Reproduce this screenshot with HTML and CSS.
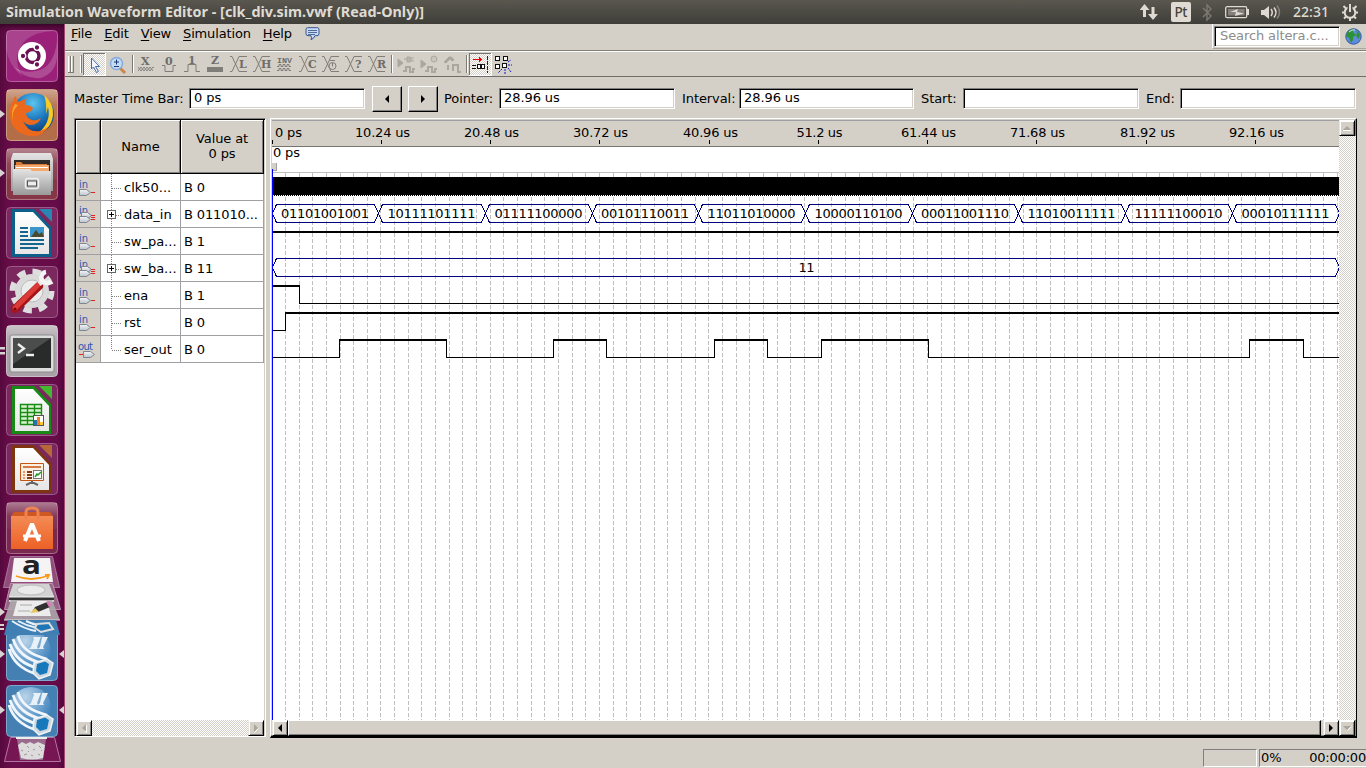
FILE: index.html
```html
<!DOCTYPE html>
<html lang="en">
<head>
<meta charset="utf-8">
<title>Simulation Waveform Editor</title>
<link rel="stylesheet" href="styles.css">
</head>
<body>
<svg width="0" height="0" class="defs">
  <defs>
    <linearGradient id="gloss" x1="0" y1="0" x2="0" y2="1"><stop offset="0" stop-color="#fff" stop-opacity=".38"/><stop offset=".5" stop-color="#fff" stop-opacity=".08"/><stop offset="1" stop-color="#fff" stop-opacity=".04"/></linearGradient>
    <linearGradient id="silver" x1="0" y1="0" x2="0" y2="1"><stop offset="0" stop-color="#e4e4e4"/><stop offset="1" stop-color="#9a9a9a"/></linearGradient>
    <linearGradient id="orange" x1="0" y1="0" x2="0" y2="1"><stop offset="0" stop-color="#f48b55"/><stop offset="1" stop-color="#ec6126"/></linearGradient>
    <linearGradient id="paper" x1="0" y1="0" x2="0" y2="1"><stop offset="0" stop-color="#fff"/><stop offset="1" stop-color="#e6e6e6"/></linearGradient>
    <linearGradient id="pin" x1="0" y1="0" x2="0" y2="1"><stop offset="0" stop-color="#f4f6f8"/><stop offset="1" stop-color="#b9c2cc"/></linearGradient>
    <radialGradient id="sea" cx=".5" cy=".25" r=".8"><stop offset="0" stop-color="#5cc4ee"/><stop offset=".5" stop-color="#1b76bd"/><stop offset="1" stop-color="#0d2c66"/></radialGradient>
    <radialGradient id="ball" cx=".35" cy=".25" r=".85"><stop offset="0" stop-color="#b9d4ea"/><stop offset="1" stop-color="#2c76b4"/></radialGradient>
    <pattern id="dither" width="2" height="2" patternUnits="userSpaceOnUse"><rect width="2" height="2" fill="#fff"/><rect width="1" height="1" fill="#d4d0c8"/><rect x="1" y="1" width="1" height="1" fill="#d4d0c8"/></pattern>
    <symbol id="pin-in" viewBox="0 0 24 27"><text x="3" y="14" class="pin-label">in</text><path d="M3.500 15.500h7l4 3-4 3h-7z" fill="url(#pin)" stroke="#7d858e"/><path d="M15 18h4v1h-4z" fill="#e82020"/></symbol>
    <symbol id="pin-bus" viewBox="0 0 24 27"><text x="3" y="13" class="pin-label">in</text><path d="M5.500 11.500h6l4 3-4 3h-6z" fill="url(#pin)" stroke="#7d858e"/><path d="M3.500 15.500h7l4 3-4 3h-7z" fill="url(#pin)" stroke="#7d858e"/><path d="M15 14h4v1h-4zM15 16h4v1h-4zM15 18h4v1h-4z" fill="#e82020"/></symbol>
    <symbol id="pin-out" viewBox="0 0 24 27"><text x="2" y="14" class="pin-label" textLength="15">out</text><path d="M7.500 15.500h7l4 3-4 3h-7z" fill="url(#pin)" stroke="#7d858e"/><path d="M3 18h4v1h-4z" fill="#e82020"/></symbol>
    <symbol id="quartus" viewBox="0 0 52 52">
      <rect x=".5" y=".5" width="51" height="51" rx="4" fill="#4580b2" stroke="#7ea8cb"/>
      <circle cx="25" cy="22" r="20" fill="url(#ball)"/>
      <path d="M3 20q5 18 27 25M4 15q6 19 28 24M7 10q6 19 29 24M12 7q4 17 29 23" fill="none" stroke="#f0f6fb" stroke-width="2.800"/>
      <path d="M28 34l13-4 6 4-3 12-11 4-6-6z" fill="#cfd8df" stroke="#f2f5f7" stroke-width="1.500"/>
      <path d="M31 35l8-2.500 4 2.500-2 9-7 2-4-4z" fill="#1778bb"/>
      <path d="M27 8h8l-1 2-3 8 1 2h-9l2-2 3-8zM36 8h6l-1 2-4 8 1 2h-6l2-2z" fill="#e8f1f8"/>
    </symbol>
  </defs>
</svg>

<header class="panel">
  <svg class="title" width="420" height="24"><text x="0" y="17" textLength="418" lengthAdjust="spacingAndGlyphs">Simulation Waveform Editor - [clk_div.sim.vwf (Read-Only)]</text></svg>
  <svg class="tray" width="226" height="24" fill="#dfdbd2">
    <path d="M4.500 4l5 6h-3.500v7h-3v-7h-3.500zM13 20l-5-6h3.500v-7h3v7h3.500z"/>
    <rect x="31" y="2" width="20" height="20" rx="2"/><text x="34.500" y="17" class="kbd" textLength="13">Pt</text>
    <path d="M63 8l8 8-4 4v-15l4 4-8 8" fill="none" stroke="#7e7a72" stroke-width="1.400"/>
    <rect x="85.700" y="6.700" width="21" height="11" rx="1.500" fill="none" stroke="#dfdbd2" stroke-width="1.300"/><path d="M107 9h2v6h-2z"/><rect x="88" y="9" width="16.500" height="6.500" fill="#85817a"/><path d="M90 12l8-3-1 3 7 1.500-9 2.500 1-4z"/>
    <path d="M121 10h3l5-4v13l-5-4h-3z"/><path d="M131 9q2.500 3.500 0 7M134 7.500q4 5 0 10" fill="none" stroke="#dfdbd2" stroke-width="1.500"/><path d="M137 5.500q5 7 0 13" fill="none" stroke="#85817a" stroke-width="1.500"/>
    <text x="153" y="17" class="clock" textLength="36">22:31</text>
    <circle cx="210" cy="12.500" r="5.300" fill="none" stroke="#dfdbd2" stroke-width="2"/><path d="M207.500 4h5v6h-5z" fill="#4e4c45"/><path d="M210 4v8M203.500 6l2.500 2.500M216.500 6l-2.500 2.500M202 12.500h3M215 12.500h3M204 18.500l2-2M216 18.500l-2-2M210 18v3" stroke="#dfdbd2" stroke-width="2"/>
  </svg>
</header>

<div class="desktop">
<aside class="launcher">
  <svg class="tile" viewBox="0 0 52 52"><rect x=".5" y=".5" width="51" height="51" rx="4" fill="#9a2079" stroke="#b55f9e"/><path d="M1 1h50q-24 0-34 12-12 16 0 34-22-18-16-46z" fill="#fff" opacity=".16"/><path d="M51 10q-2 24-17 30-15 5-27-4 12 14 28 12 14-5 16-20z" fill="#fff" opacity=".2"/><circle cx="26" cy="26" r="14" fill="#fff"/><circle cx="26.500" cy="26" r="6.500" fill="none" stroke="#6c1152" stroke-width="3.400"/><g fill="#6c1152" stroke="#fff" stroke-width="1.300"><circle cx="17" cy="26" r="2.800"/><circle cx="31" cy="17.500" r="2.800"/><circle cx="31" cy="34.500" r="2.800"/></g></svg>
  <svg class="tile" viewBox="0 0 52 52"><rect x=".5" y=".5" width="51" height="51" rx="4" fill="#b36d48" stroke="#c99b80"/><rect x="1" y="1" width="50" height="30" fill="url(#gloss)"/><circle cx="27" cy="25" r="21" fill="url(#sea)"/><path d="M38 6q10 8 9 20-2 16-17 20 16-12 12-28l-2 7q1-10-2-19z" fill="#f9cb22"/><path d="M7 12q1-4 3-5 0 4 3 6 4-3 8-3-3 3-2 6 5 0 8 3-1 4-7 5 0 5 6 7 5 1 9-2-3 7-10 7-5 0-8-4 5 12 17 10 5-1 9-5-7 12-20 10-18-4-19-20-1-8 3-15z" fill="#ec681c"/><path d="M9 15q-5 8-2 17-2-9 5-16z" fill="#f6a32b"/></svg>
  <svg class="tile" viewBox="0 0 52 52"><rect x=".5" y=".5" width="51" height="51" rx="4" fill="#853748" stroke="#ad7482"/><rect x="1" y="1" width="50" height="30" fill="url(#gloss)"/><path d="M7 5h38l2 6v32h-42v-32z" fill="url(#silver)"/><path d="M8 12h36v12h-36z" fill="#302b28"/><path d="M10 14h5l2 2h24v6h-31z" fill="#d97a3a"/><path d="M9 17h34v6h-34z" fill="#f4a86c"/><path d="M10 19.500h32" stroke="#fff" stroke-width="1"/><path d="M7 21h17l2 2h19v24h-38z" fill="url(#silver)"/><rect x="19.500" y="30.500" width="13" height="10" rx="2" fill="none" stroke="#eee" stroke-width="1.500"/><rect x="21.500" y="33" width="9" height="5" fill="#eee" stroke="#555"/></svg>
  <svg class="tile" viewBox="0 0 52 52"><rect class="plate" x=".5" y=".5" width="51" height="51" rx="4"/><path d="M6 2h22l17 18v30h-39v-46z" fill="#0c5f8b"/><path d="M9 5h18l16 17v25h-34z" fill="url(#paper)"/><path d="M33 2h13v13z" fill="#2a85b5"/><path d="M14 21h8M14 25h8M14 29h8M14 33h24M14 37h24M14 41h18" stroke="#15658f" stroke-width="1.800"/><path d="M24 20h14v10h-14z" fill="#3d96cb"/><path d="M25 30l5-7 3 4 3-2 2 5z" fill="#4a4a30"/></svg>
  <svg class="tile" viewBox="0 0 52 52"><rect class="plate" x=".5" y=".5" width="51" height="51" rx="4"/><circle cx="26" cy="25" r="19.500" fill="none" stroke="#dedede" stroke-width="6" stroke-dasharray="8.300 7"/><circle cx="26" cy="25" r="17" fill="#d9d9d9"/><circle cx="26" cy="25" r="11" fill="#ececec" stroke="#bcbcbc"/><path d="M9 43L33 20" stroke="#a51418" stroke-width="8" stroke-linecap="round"/><path d="M9 42L32 19" stroke="#db3a37" stroke-width="5" stroke-linecap="round"/><path d="M33 18l5-4" stroke="#e9e9e9" stroke-width="5"/><path d="M40 6a5.500 5.500 0 1 0 5 9" fill="none" stroke="#f3f3f3" stroke-width="4.500"/><circle cx="9" cy="43" r="1.500" fill="#701"/></svg>
  <svg class="tile" viewBox="0 0 52 52"><rect x=".5" y=".5" width="51" height="51" rx="4" fill="#aaa1a8" stroke="#c8c0c5"/><rect x="1" y="1" width="50" height="26" fill="url(#gloss)"/><rect x="4" y="10" width="44" height="37" rx="2" fill="#dcdcdc" stroke="#8c8c8c"/><rect x="7" y="13" width="38" height="30" fill="#292b2b"/><path d="M7 13h38l-38 26z" fill="#fff" opacity=".16"/><path d="M12 19l6 4.500-6 4.500M20 30h8" fill="none" stroke="#eee" stroke-width="2.300"/></svg>
  <svg class="tile" viewBox="0 0 52 52"><rect class="plate" x=".5" y=".5" width="51" height="51" rx="4"/><path d="M6 2h22l17 18v30h-39v-46z" fill="#168a15"/><path d="M9 5h18l16 17v25h-34z" fill="url(#paper)"/><path d="M33 2h13v13z" fill="#45b830"/><path d="M14 20h22v21h-22z" fill="#d8f3cf"/><path d="M14.500 20.500h21v20h-21zM14 24.500h22M14 28.500h22M14 32.500h22M14 36.500h22M21.500 20v21M28.500 20v21" fill="none" stroke="#188a16" stroke-width="1.400"/><rect x="27.500" y="31.500" width="10" height="10" fill="#fff" stroke="#555"/><path d="M28 36h3v5h-3z" fill="#2276ad"/><path d="M31 33h3v8h-3z" fill="#ef7e26"/><path d="M34 38h3v3h-3z" fill="#fdc527"/></svg>
  <svg class="tile" viewBox="0 0 52 52"><rect class="plate" x=".5" y=".5" width="51" height="51" rx="4"/><path d="M6 2h22l17 18v30h-39v-46z" fill="#7e3411"/><path d="M9 5h18l16 17v25h-34z" fill="url(#paper)"/><path d="M33 2h13v13z" fill="#b6683a"/><path d="M14.500 20.500h23v17h-23z" fill="#fbeee2" stroke="#c65413"/><path d="M17 24h18" stroke="#c65413" stroke-width="1.500"/><path d="M17 29h2M17 32h2M17 35h2" stroke="#ee9a5e" stroke-width="2"/><path d="M21 29h5M21 32h5M21 35h5" stroke="#833b19" stroke-width="2"/><rect x="27.500" y="27.500" width="8" height="8" fill="#fff" stroke="#777"/><path d="M29 34l2-3 1 1 3-3" fill="none" stroke="#299629" stroke-width="1.500"/><path d="M26 38v3M20 42l6-3 6 3" fill="none" stroke="#666" stroke-width="2"/></svg>
  <svg class="tile" viewBox="0 0 52 52"><rect x=".5" y=".5" width="51" height="51" rx="4" fill="#79294d" stroke="#a76c89"/><rect x="1" y="1" width="50" height="26" fill="url(#gloss)"/><path d="M5 14h42v33h-42z" fill="url(#orange)"/><path d="M5 14l3-4h36l3 4z" fill="#cf5722"/><path d="M20 17v-7q0-4 6-4t6 4v7" fill="none" stroke="#ee8250" stroke-width="3"/><path d="M19 39l6.500-16h1l6.500 16" fill="none" stroke="#fff" stroke-width="4"/><path d="M17 34h18" stroke="#fff" stroke-width="3"/></svg>
  <svg class="stack" width="64" height="214" viewBox="0 0 64 214">
    <path d="M10.500 1.500h42l7 31h-56z" fill="#914d79" stroke="#a9759a"/>
    <path d="M14 3h36l3 24h-42z" fill="#f5f3f4"/><text x="22" y="19" class="amazon" textLength="19" lengthAdjust="spacingAndGlyphs">a</text><path d="M16 21q15 6 31 0M45 20l4 0-2 4" fill="none" stroke="#f79b1c" stroke-width="1.800"/>
    <path d="M10.500 28.500h42l8 26h-56z" fill="#966587" stroke="#bc95ad"/>
    <path d="M13 29h36l5 12v6h-45v-6z" fill="#d2d2d2"/><ellipse cx="31" cy="35" rx="14" ry="5" fill="#eaeaea" stroke="#bbb"/><path d="M9 42h45v3h-45z" fill="#333"/><path d="M9 42h45" stroke="#f5f5f5"/>
    <path d="M11 45l41 0 8 20h-56z" fill="#ada9ac" opacity=".9"/><path d="M4 65h56" stroke="#ddd"/>
    <path d="M17 46h30l4 15h-38z" fill="#ececec"/><path d="M20 50h12M18 56h12" stroke="#aaa"/><path d="M32 57l3-5 12-5 3 5-12 5z" fill="#303030"/><path d="M30 58l5-5 4 4z" fill="#e9c463"/><path d="M46 47l3-1 3 5-3 1z" fill="#d979b4"/>
    <path d="M8 65h48l4 15h-56z" fill="#3f7fb3"/><path d="M12 66q12 8 24 10M18 66q9 5 19 7M26 66q6 3 12 4" fill="none" stroke="#e8f1f8" stroke-width="2"/><path d="M37 69l12-1 4 6-12 3-6-4z" fill="#1f75b5" stroke="#ddd" stroke-width="2"/>
    <svg x="6" y="80" width="52" height="46" viewBox="0 6 52 46"><use href="#quartus" width="52" height="52"/></svg>
    <use href="#quartus" x="6" y="130" width="52" height="52"/>
    <path d="M10.500 182.500h44l6 24h-56z" fill="#761754" stroke="#b173a0"/><path d="M16 183h31" stroke="#eee" stroke-width="2"/><path d="M17 184h29l-3 21h-23z" fill="#9a6b8d"/><path d="M18 190l4-3 4 2 4-2 4 2 4-2 7 3-2 13q-11 3-22 0z" fill="#dddbdc"/><path d="M21 195l2 1M27 191l2 2M33 195l2-1M39 191l2 2M24 200l3-1M31 200l2 1M38 199l2 1M28 196l1 1M41 196l1-1" stroke="#9c979a"/>
  </svg>
  <svg class="pips" width="65" height="744" fill="#d7d3d1"><path d="M0 86l5 4-5 4zM0 145l5 4-5 4zM0 323h5v2.500h-5zM0 328h5v2.500h-5zM0 584l5 4-5 4zM0 600h4v2h-4zM0 604h4v2h-4zM0 626l5 4-5 4zM64 626l-5 4 5 4zM0 682l5 4-5 4zM64 682l-5 4 5 4z"/></svg>
</aside>

<main class="app">
  <nav class="menubar">
    <span class="menu"><u>F</u>ile</span><span class="menu"><u>E</u>dit</span><span class="menu"><u>V</u>iew</span><span class="menu"><u>S</u>imulation</span><span class="menu"><u>H</u>elp</span>
    <svg class="bubble" width="15" height="14" viewBox="0 0 15 14"><path d="M2.500.7h10q1.500 0 1.500 2v4q0 2-2 2h-2q-1 3-4 4 1-2 0-4h-3q-2 0-2-2v-4q0-2 1.500-2z" fill="#c7d9f4" stroke="#35558e"/><path d="M3 3.500h9M3 5.500h9M3 7.500h7" stroke="#31517f" stroke-width=".8"/></svg>
    <div class="search"><div class="field search-field">Search altera.c...</div>
      <svg width="17" height="17" viewBox="0 0 17 17"><circle cx="8.500" cy="8.500" r="7.700" fill="#5e8be0" stroke="#31569d"/><path d="M2 5q4-5 7-4l-1 3 3 3-3 2v3l-2 3-2-5-3-2zM11 2l4 4-1 5-3-3 1-3z" fill="#2d9135"/><path d="M4 4q3-3 6-2" stroke="#d8e8ff" fill="none"/></svg>
    </div>
  </nav>

  <svg class="toolbar" width="1301" height="27">
    <g shape-rendering="crispEdges"><path d="M0 0h1301v1h-1301z" fill="#808078"/><path d="M0 1h1301v1h-1301z" fill="#fff"/><path d="M0 26h1301v1h-1301z" fill="#6f6d68"/>
    <path d="M3 6h1v17h-1zM6 6h1v17h-1zM15 6h1v17h-1z" fill="#fff"/><path d="M5 6h1v17h-1zM8 6h1v17h-1zM3 22h3v1h-3zM6 22h3v1h-3zM16 5h1v18h-1zM67 5h1v18h-1zM326 5h1v18h-1zM401 5h1v18h-1z" fill="#7d7b75"/><path d="M68 5h1v18h-1zM327 5h1v18h-1zM402 5h1v18h-1z" fill="#fff"/>
    <rect x="18" y="3" width="22" height="22" fill="url(#dither)"/><path d="M18 25v-22h22" fill="none" stroke="#77756f"/><path d="M40 3v22h-22" fill="none" stroke="#fff"/>
    <rect x="404" y="3" width="22" height="22" fill="url(#dither)"/><path d="M404 25v-22h22" fill="none" stroke="#77756f"/><path d="M426 3v22h-22" fill="none" stroke="#fff"/></g>
    <path d="M26.500 8l8 8.500h-4l3 5-2 1-3-5.500-2 2z" fill="#f2f6fc" stroke="#476ba5"/>
    <path d="M55 18l5 5" stroke="#cc854a" stroke-width="3"/><circle cx="51.500" cy="13.500" r="6" fill="#c4dbf4" stroke="#86abda" stroke-width="1.500"/><path d="M49 12h5M51.500 9.500v5M49 16.500h5" stroke="#173b7a"/>
    <g fill="none" stroke="#807e78">
      <path d="M73 21l3-4 3 4 3-4 3 4 3-4 1 1M73 17l3 4 3-4 3 4 3-4 3 4" stroke-width=".9"/>
      <path d="M97 15.500h3v6h8v-6h3M119 21.500h4v-7h8v7h4"/><path d="M142 17h16v5h-16z" fill="#807e78" stroke="none"/>
      <path id="cross" d="M165 6.500h2l7 15h8M165 21.500h2l7-15h8"/>
      <use href="#cross" x="23"/><use href="#cross" x="69"/><use href="#cross" x="92"/><use href="#cross" x="115"/><use href="#cross" x="138"/>
      <path d="M212 16.500h2v-2h2v2h2v-2h2v2h2v-2h2v2h2M212 20.500h2v-2h2v2h2v-2h2v2h2v-2h2v2h2"/>
      <circle cx="267.500" cy="16" r="3.500" fill="#d4d0c8"/><path d="M265 10.500h5M267.500 13v3.500"/>
    </g>
    <g class="glyph"><text x="76" y="15">X</text><text x="100" y="15">0</text><text x="123" y="14">1</text><text x="146" y="14">Z</text><text x="174" y="18">L</text><text x="196" y="18">H</text><text x="212" y="13" class="inv" textLength="15" lengthAdjust="spacingAndGlyphs">INV</text><text x="243" y="18">C</text><text x="290" y="18">?</text><text x="312" y="18">R</text></g>
    <g stroke="#aaa79f" fill="#aaa79f"><path d="M333 9l5 4-5 4z"/><path d="M338 21h3v-4h4v5h3v-3h2" fill="none" stroke-width="2"/><path d="M339 9h3v-2h3q3 2 0 5h-3v-2M346 8h3M346 11h3" fill="#b9b5ad"/>
    <path d="M356 10l5 4-5 4z"/><path d="M360 21h3v-4h4v5h3v-3h2" fill="none" stroke-width="2"/><circle cx="369" cy="9" r="3" fill="#c9c5bd"/>
    <path d="M379 12l5-5q3-1 5 3l-2 1-2-2-4 4z"/><path d="M383 20v-5M387 20h1v-5h5v7h3" fill="none" stroke-width="2"/></g>
    <g shape-rendering="crispEdges"><path d="M408 10h8v-1h-8z" fill="#e00"/><path d="M414 7l3 2.500-3 3z" fill="#e00"/><path d="M407 15.500h4M407 18.500h4M412.500 14.500h3v4h-3zM416.500 14.500h3v4h-3z" fill="#fff" stroke="#111"/><path d="M422.500 6v17" stroke="#11c" stroke-dasharray="4 1"/>
    <g fill="#fff" stroke="#111"><path d="M430.500 6.500h4v4h-4zM438.500 6.500h4v4h-4zM430.500 14.500h4v4h-4zM437.500 13.500h4v4h-4z"/></g></g><path d="M440 19v5M437 19l-4 4M443 18l3 4M443 15h4M443 12l3-2" stroke="#11c" stroke-dasharray="2 1"/>
  </svg>

  <section class="timebar">
    <span class="l-master">Master Time Bar:</span><div class="field">0 ps</div>
    <div class="step step-first"><svg width="12" height="12"><path d="M8 1v8l-4-4z"/></svg></div><div class="step"><svg width="12" height="12"><path d="M4 1v8l4-4z"/></svg></div>
    <span class="l-pointer">Pointer:</span><div class="field">28.96 us</div>
    <span class="l-interval">Interval:</span><div class="field f175">28.96 us</div>
    <span class="l-start">Start:</span><div class="field"></div>
    <span class="l-end">End:</span><div class="field"></div>
  </section>

  <section class="work">
    <div class="signals">
      <div class="row head"><div class="c-pin"></div><div class="c-name">Name</div><div class="c-value">Value at<br>0 ps</div></div>
      <div id="rows"></div>
      <div class="hscroll"><div class="sbtn"><svg width="12" height="12"><path d="M8 2v8l-4-4z" fill="#aaa69e"/><path d="M8.500 3v7.500l-2-1.500" fill="none" stroke="#fff"/></svg></div><div class="track"></div><div class="sbtn"><svg width="12" height="12"><path d="M4 2v8l4-4z" fill="#aaa69e"/><path d="M4.500 10.500l4-4" stroke="#fff"/></svg></div></div>
    </div>
    <div class="viewer">
      <div class="plotcol">
        <svg id="plot" width="1067" height="600" viewBox="272 120 1067 600"></svg>
        <div class="hscroll"><div class="sbtn"><svg width="12" height="12"><path d="M8 2v8l-4-4z"/></svg></div><div class="thumb"></div><div class="sbtn"><svg width="12" height="12"><path d="M4 2v8l4-4z"/></svg></div></div>
      </div>
      <div class="vscroll"><div class="sbtn"><svg width="12" height="12"><path d="M2 8h8l-4-4z" fill="#aaa69e"/><path d="M2 8.500h8" stroke="#fff"/></svg></div><div class="track"></div><div class="sbtn"><svg width="12" height="12"><path d="M2 4h8l-4 4z" fill="#aaa69e"/><path d="M6.500 8.500l4-4" stroke="#fff"/></svg></div></div>
    </div>
  </section>

  <footer class="status"><div class="cell"></div><div class="cell wide"><span>0%</span><span class="elapsed">00:00:00</span></div></footer>
</main>
</div>
<script src="waves.js"></script>
</body>
</html>
```
FILE: styles.css
```css
* { box-sizing: border-box; }
body { margin: 0; width: 1366px; height: 768px; overflow: hidden; background: #d4d0c8; color: #000; font: 13px/16px "DejaVu Sans", sans-serif; }
svg { display: block; flex: none; }
.defs { position: absolute; }

.panel { display: flex; justify-content: space-between; height: 24px; padding: 0 0 0 6px; background: linear-gradient(#59574e, #3f3e39); }
.panel text { fill: #dfdbd2; font: bold 14px "Noto Sans", sans-serif; }
.panel .kbd { fill: #45433e; font-weight: 500; font-size: 13.5px; }
.panel .clock { font-weight: 500; font-size: 14px; }

.desktop { display: flex; height: 744px; }
.launcher { position: relative; display: flex; flex-direction: column; gap: 7px; width: 65px; height: 744px; padding: 6px 0 0 6px; overflow: hidden; background: linear-gradient(90deg, #5a0a40, #6a0d4b 20%, #650b48 90%, #56083d); border-right: 1px solid #a0466f; box-shadow: inset 0 6px 6px -4px #2c0520; }
.tile { width: 52px; height: 52px; }
.plate { fill: #7b285f; stroke: #9b5b88; }
.stack { margin: -6px 0 0 -6px; overflow: visible; }
.pips { position: absolute; left: 0; top: 0; }
.amazon { font: bold 25px "Open Sans", sans-serif; fill: #222; }

.app { display: flex; flex-direction: column; width: 1301px; }
.menubar { display: flex; height: 26px; padding-left: 6px; }
.menu { margin-right: 12px; padding-top: 2px; letter-spacing: -.15px; }
.menu u { text-underline-offset: 2px; }
.bubble { margin: 3px 0 0 1px; }
.search { display: flex; align-items: center; gap: 5px; width: 154px; height: 25px; margin-left: auto; padding-left: 1px; border-left: 1px solid #fff; border-bottom: 1px solid #aaa69e; }
.search .search-field { width: 126px; height: 21px; padding: 1px 0 0 5px; color: #8c8c8c; letter-spacing: -.1px; }
.toolbar .glyph text { font: bold 11px "DejaVu Serif", serif; fill: #6f6d68; }
.toolbar .glyph .inv { font: bold 8px "Liberation Mono", monospace; }

.field { flex: none; width: 176px; height: 21px; padding: 1px 0 0 4px; background: #fff; border: 1px solid; border-color: #808080 #fff #fff #808080; box-shadow: inset 1px 1px #000, inset -1px -1px #d4d0c8; white-space: nowrap; }
.f175 { width: 175px; }
.timebar { display: flex; align-items: center; height: 41px; padding: 2px 0 0 9px; white-space: nowrap; letter-spacing: -.08px; }
.l-master { width: 115px; }
.l-pointer { width: 55px; }
.l-interval { width: 57px; margin-left: 7px; }
.l-start { width: 42px; margin-left: 7px; }
.l-end { width: 34px; margin-left: 7px; }
.step { display: flex; align-items: center; justify-content: center; width: 30px; height: 26px; margin-right: 6px; }
.step-first { margin-left: 7px; }
.step, .sbtn, .thumb { background: #d4d0c8; border: 1px solid; border-color: #fff #000 #000 #fff; box-shadow: inset -1px -1px #808080; }
.step svg { margin-top: 2px; }

.work { display: flex; gap: 4px; height: 620px; padding: 0 0 0 9px; }
.signals { display: flex; flex-direction: column; width: 192px; height: 619px; padding: 1px 1px 0 1px; background: #fff; border: 1px solid; border-color: #808080 #fff #fff #808080; box-shadow: inset 1px 1px #000, inset -1px -1px #d4d0c8; }
.row { display: flex; height: 27px; }
.row > div { border-right: 1px solid #a0a0a4; border-bottom: 1px solid #a0a0a4; white-space: nowrap; }
.c-pin { width: 25px; background: #d4d0c8; }
.c-name { display: flex; width: 80px; }
.c-name span { padding-top: 6px; }
.c-value { width: 83px; padding: 6px 0 0 3px; letter-spacing: -.12px; }
.row.head { height: 54px; }
.row.head > div { display: flex; align-items: center; justify-content: center; padding: 0; line-height: 15px; text-align: center; background: #d4d0c8; border-color: #000; box-shadow: inset 1px 1px #fff, inset -1px -1px #808080; }
.row.head > .c-value { padding-bottom: 2px; }
.pin-label { font: 10px "DejaVu Sans", sans-serif; fill: #2f55b0; }
#rows { flex: 1; }
.hscroll, .vscroll { display: flex; }
.hscroll { height: 16px; }
.vscroll { flex-direction: column; width: 17px; }
.sbtn { display: flex; align-items: center; justify-content: center; width: 16px; height: 16px; flex: none; border-left-color: #e8e5df; box-shadow: inset 1px 1px #fff, inset -1px -1px #808080; }
.thumb, .track { flex: 1; }
.track { background: repeating-conic-gradient(#d4d0c8 0 25%, #fff 0 50%) 0 0 / 2px 2px; }
.thumb { margin-right: 2px; }
.viewer { display: flex; width: 1087px; height: 620px; padding: 1px 0 0 1px; border-top: 1px solid #fff; border-left: 1px solid #fff; border-right: 1px solid #000; border-bottom: 2px solid #000; box-shadow: inset 0 -1px #808080, inset -1px 0 #808080; }
.plotcol { width: 1067px; }
.sig { font: 13px "DejaVu Sans", sans-serif; }

.status { display: flex; justify-content: flex-end; gap: 2px; padding-top: 11px; }
.cell { width: 54px; height: 18px; border: 1px solid; border-color: #808080 #fff #fff #808080; }
.cell.wide { display: flex; justify-content: space-between; width: 107px; padding: 0 0 0 1px; border-right: 0; }
.elapsed { letter-spacing: -.2px; }
```
FILE: waves.js
```js
const rows = [
  ['in', 'clk50...', 'B 0'],
  ['bus', 'data_in', 'B 011010...'],
  ['in', 'sw_pa...', 'B 1'],
  ['bus', 'sw_ba...', 'B 11'],
  ['in', 'ena', 'B 1'],
  ['in', 'rst', 'B 0'],
  ['out', 'ser_out', 'B 0'],
];
document.getElementById('rows').innerHTML = rows.map(([kind, name, value], i) => {
  const bus = kind === 'bus';
  const end = i === rows.length - 1 ? 14 : 27;
  return `<div class="row"><div class="c-pin"><svg width="24" height="27"><use href="#pin-${kind}" width="24" height="27"/></svg></div>` +
    `<div class="c-name"><svg width="23" height="26" shape-rendering="crispEdges"><path d="M10.5 0V${end}M11 14.500H20" stroke="#808080" stroke-dasharray="1 1"/>` +
    (bus ? '<path d="M6.5 9.500h8v8h-8z" fill="#fff" stroke="#666"/><path d="M8 13.500h5M10.5 11v5" stroke="#000"/>' : '') +
    `</svg><span>${name}</span></div><div class="c-value">${value}</div></div>`;
}).join('');

const LEFT = 272, RIGHT = 1339;
const out = [];
const rect = (x, y, w, h, fill) => out.push(`<rect x="${x}" y="${y}" width="${w}" height="${h}" fill="${fill}"/>`);
const label = (x, y, s, len, anchor = 'start') => out.push(`<text class="sig" x="${x}" y="${y}" text-anchor="${anchor}" textLength="${len}">${s}</text>`);

rect(LEFT, 120, 1067, 600, '#fff');
rect(LEFT, 120, 1067, 26, '#d4d0c8');
rect(LEFT, 120, 1067, 1, '#a0a0a4');
rect(LEFT, 146, 1067, 1, '#77756f');
rect(LEFT, 172, 1067, 1, '#c0c0c0');

// Time ruler
['0 ps', '10.24 us', '20.48 us', '30.72 us', '40.96 us', '51.2 us', '61.44 us', '71.68 us', '81.92 us', '92.16 us'].forEach((s, i) => {
  const x = Math.floor(LEFT + i * 109.25);
  rect(x, 140, 1, 4, '#000');
  if (i === 0) label(275, 137, s, 27);
  else label(x + 1.5, 137, s, s.length === 7 ? 46 : 55, 'middle');
});
label(273, 157, '0 ps', 27);

// Grid
for (let n = 1; n <= 78; n++) {
  const x = Math.floor(271.69 + n * 13.662) + 0.5;
  out.push(`<path d="M${x} 173V720" stroke="#c0c0c0" stroke-dasharray="4 2"/>`);
}

// Clock
rect(LEFT, 177, 1067, 18, '#000');
out.push(`<path d="M${LEFT} 195.500H${RIGHT}" stroke="#000" stroke-dasharray="1 1"/>`);

// Buses: hexagonal cells joined by crossings
function bus(y, values) {
  const w = (RIGHT - LEFT) / values.length;
  values.forEach((v, i) => {
    const a = Math.floor(LEFT + i * w), b = Math.floor(LEFT + (i + 1) * w);
    out.push(`<path d="M${a + 0.5} ${y + 9.5}l4 -9H${b - 3.5}l4 9l-4 9H${a + 4.5}z" fill="none" stroke="#000080"/>`);
    label((a + b) / 2 + (v.length < 3 ? 1 : 0), y + 14, v, v.length * 8, 'middle');
  });
}
bus(204, ['01101001001', '10111101111', '01111100000', '00101110011', '11011010000', '10000110100', '00011001110', '11010011111', '11111100010', '00010111111']);
bus(258, ['11']);

// Single-bit signals: high levels are two pixels thick
function wave(top, level, edges) {
  let x = LEFT;
  [...edges, RIGHT].forEach((e) => {
    if (level) rect(x, top, e - x + 1, 2, '#000');
    else rect(x, top + 18, e - x + 1, 1, '#000');
    if (e < RIGHT) rect(e, top, 1, 19, '#000');
    x = e;
    level = !level;
  });
}
wave(231, true, []);
wave(285, true, [299]);
wave(312, false, [285]);
wave(339, false, [339, 446, 553, 606, 714, 767, 821, 928, 1249, 1303]);

// Master time bar
rect(272, 163, 5, 7, '#d4d0c8');
rect(276, 163, 1, 8, '#a0a0a0');
rect(272, 170, 5, 1, '#a0a0a0');
rect(272, 169, 1, 551, '#00f');
document.getElementById('plot').innerHTML = '<g shape-rendering="crispEdges">' + out.join('') + '</g>';
```
